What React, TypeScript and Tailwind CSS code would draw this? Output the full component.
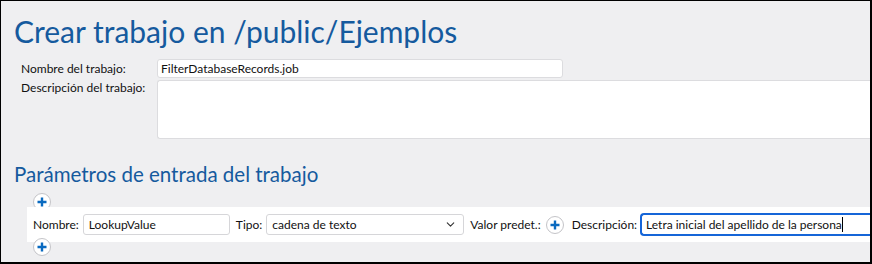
import { ChevronDown } from "lucide-react";

function PlusButton() {
  return (
    <button
      type="button"
      className="flex h-[18px] w-[18px] shrink-0 items-center justify-center rounded-full border border-[#c4c4c8] bg-white"
    >
      <svg width="10" height="10" viewBox="0 0 10 10" aria-hidden>
        <path d="M5 0.5v9M0.5 5h9" stroke="#0a6ac0" strokeWidth="2.4" />
      </svg>
    </button>
  );
}

export default function App() {
  return (
    <div
      className="h-[264px] w-[872px] overflow-hidden border-t border-l border-r-2 border-b-2 border-black bg-[#efeff1] text-[12px] text-[#111]"
      style={{ fontFamily: 'Lato, "Noto Sans", sans-serif' }}
    >
      <h1 className="ml-[13px] mt-[10px] text-[30px] leading-[40px] text-[#155a9e]">
        Crear trabajo en /public/Ejemplos
      </h1>

      <div className="mt-[8px] flex items-center">
        <span className="ml-[20px] w-[136px]">Nombre del trabajo:</span>
        <input
          readOnly
          value="FilterDatabaseRecords.job"
          className="h-[19px] w-[406px] rounded-[3px] border border-[#dcdcdf] bg-white px-[3px] text-[12px] outline-none"
        />
      </div>

      <div className="mt-[2px] flex items-start">
        <span className="ml-[20px] w-[136px] leading-[16px]">Descripción del trabajo:</span>
        <div className="h-[59px] flex-1 rounded-l-[3px] border border-r-0 border-[#dcdcdf] bg-white" />
      </div>

      <h2 className="ml-[13px] mt-[22px] text-[20.5px] leading-[26px] text-[#155a9e]">
        Parámetros de entrada del trabajo
      </h2>

      <div className="ml-[32px] mt-[6px]">
        <PlusButton />
      </div>

      <div className="-mt-[4px] ml-[26px] flex h-[35px] items-center whitespace-nowrap bg-white pl-[6px]">
        <span className="mr-[4px]">Nombre:</span>
        <input
          readOnly
          value="LookupValue"
          className="h-[21px] w-[147px] rounded-[3px] border border-[#d6d6d9] bg-white px-[5px] text-[12px] outline-none"
        />
        <span className="ml-[6px] mr-[4px]">Tipo:</span>
        <div className="flex h-[21px] w-[198px] items-center justify-between rounded-[3px] border border-[#d6d6d9] bg-white pl-[5px] pr-[6px]">
          <span>cadena de texto</span>
          <ChevronDown size={13} strokeWidth={2} className="text-[#333]" />
        </div>
        <span className="ml-[6px] mr-[5px]">Valor predet.:</span>
        <PlusButton />
        <span className="ml-[8px] mr-[3px]">Descripción:</span>
        <div className="flex h-[23px] min-w-0 flex-1 items-center rounded-l-[4px] border-2 border-r-0 border-[#1565d8] bg-white pl-[4px]">
          <span>Letra inicial del apellido de la persona</span>
          <span className="h-[15px] w-px bg-black" />
        </div>
      </div>

      <div className="-mt-[4px] ml-[32px]">
        <PlusButton />
      </div>
    </div>
  );
}
